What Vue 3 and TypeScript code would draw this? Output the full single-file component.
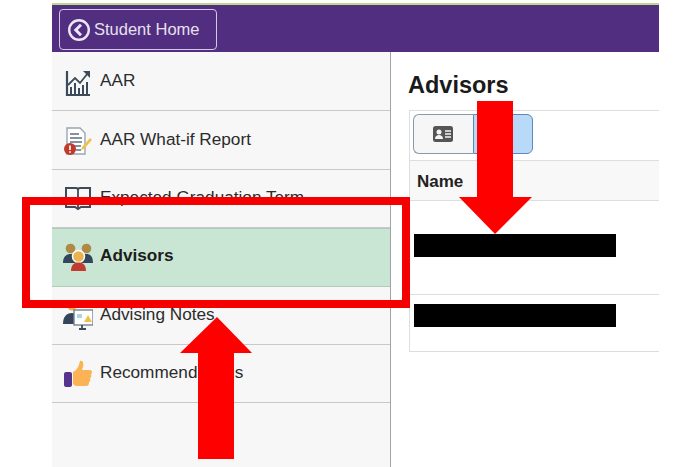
<script setup lang="ts">
interface NavItem {
  id: string
  label: string
  active?: boolean
}

const navItems: NavItem[] = [
  { id: 'aar', label: 'AAR' },
  { id: 'whatif', label: 'AAR What-if Report' },
  { id: 'grad', label: 'Expected Graduation Term' },
  { id: 'advisors', label: 'Advisors', active: true },
  { id: 'notes', label: 'Advising Notes' },
  { id: 'recs', label: 'Recommendations' },
]
</script>

<template>
  <div class="page">
    <div class="shell">
      <div class="accent"></div>
      <header class="topbar">
        <button class="home" type="button">
          <svg class="home-icon" viewBox="0 0 24 24" width="24" height="24" aria-hidden="true">
            <circle cx="12" cy="12" r="9.8" fill="none" stroke="#ece6f3" stroke-width="2.4" />
            <path d="M14 6.8 8.8 12l5.2 5.2" fill="none" stroke="#ece6f3" stroke-width="3" />
          </svg>
          <span>Student Home</span>
        </button>
      </header>

      <div class="body">
        <nav class="side">
          <a v-for="item in navItems" :key="item.id" class="row" :class="{ on: item.active }">
            <span class="ico">
              <svg v-if="item.id === 'aar'" viewBox="0 0 30 30" width="30" height="30" aria-hidden="true">
                <path d="M4 3v24h23" fill="none" stroke="#3d4a5a" stroke-width="2.2" />
                <path d="M5 17l7-7 5 5 8-10" fill="none" stroke="#3d4a5a" stroke-width="1.8" />
                <path d="M20 3h7v7z" fill="#3d4a5a" />
                <path d="M8 26v-7M12 26v-11M16 26v-6M20 26v-9M24 26v-12" stroke="#3d4a5a" stroke-width="2" fill="none" />
              </svg>
              <svg v-else-if="item.id === 'whatif'" viewBox="0 0 30 30" width="30" height="30" aria-hidden="true">
                <path d="M4 2h13l5 5v21H4z" fill="#fff" stroke="#9aa5b2" stroke-width="1.4" />
                <path d="M7 8h9M7 12h12M7 16h12M11 20h7M13 24h5" stroke="#5f6f82" stroke-width="1.5" fill="none" />
                <path d="M19 21 27 12l2 2-8 9-3 1z" fill="#eec14e" />
                <circle cx="7" cy="23" r="6" fill="#c0392b" />
                <path d="M7 19.500v4.500M7 25.200v1.500" stroke="#fff" stroke-width="1.700" fill="none" />
              </svg>
              <svg v-else-if="item.id === 'grad'" viewBox="0 0 30 30" width="30" height="30" aria-hidden="true">
                <path d="M3 4h10c1 0 2 1 2 2 0-1 1-2 2-2h10v19H18l-3 2-3-2H3z" fill="none" stroke="#3d4a5a" stroke-width="2" />
                <path d="M15 6v19" stroke="#3d4a5a" stroke-width="1.800" fill="none" />
              </svg>
              <svg v-else-if="item.id === 'advisors'" viewBox="0 0 30 30" width="30" height="30" aria-hidden="true">
                <circle cx="7.500" cy="5.500" r="4.800" fill="#b08a45" />
                <circle cx="23.500" cy="5.500" r="4.800" fill="#b08a45" />
                <path d="M0 20c0-6 3-9 8-9s8 3 8 9zM15 20c0-6 3-9 8-9s7 3 7 9z" fill="#33475c" />
                <circle cx="15.500" cy="13.500" r="6" fill="#e9b44f" stroke="#fff" stroke-width="1.500" />
                <path d="M8 28c0-6 3-8.500 7.500-8.500S23 22 23 28z" fill="#c23b30" />
              </svg>
              <svg v-else-if="item.id === 'notes'" viewBox="0 0 30 30" width="30" height="30" aria-hidden="true">
                <circle cx="9" cy="5" r="4.500" fill="#eeb04e" />
                <path d="M0 23c0-7 3-11 9-11s8 4 8 11z" fill="#33475c" />
                <rect x="11" y="9" width="19" height="15" fill="#fff" stroke="#77828f" stroke-width="1.400" />
                <path d="M21 21l4-7 4 7z" fill="#eec14e" />
                <path d="M14 13h5v4h-5z" fill="#a9d6e5" />
                <path d="M19 24v3M16 28h7" stroke="#3d4a5a" stroke-width="1.800" fill="none" />
              </svg>
              <svg v-else viewBox="0 0 30 30" width="30" height="30" aria-hidden="true">
                <rect x="1" y="12" width="8" height="15" rx="2" fill="#54348c" />
                <path d="M10 12c4-2 6-6 7-11 3-1 4 3 3 6l-1 3h8c2 0 3 3 1 4 1 2 0 4-1 4 1 2 0 4-1 4 0 3-1 4-3 4H14c-2 0-3-1-4-2z" fill="#fbb355" />
              </svg>
            </span>
            <span class="label">{{ item.label }}</span>
          </a>
        </nav>

        <main class="content">
          <h1 class="title">Advisors</h1>
          <section class="panel">
            <div class="toolbar">
              <div class="group">
                <button class="seg" type="button">
                  <svg viewBox="0 0 20 16" width="20" height="16" aria-hidden="true">
                    <rect width="20" height="16" rx="2.500" fill="#555" />
                    <circle cx="6" cy="6" r="2.500" fill="#f5f5f5" />
                    <path d="M2 13c0-3 2-4 4-4s4 1 4 4z" fill="#f5f5f5" />
                    <path d="M12 5h6M12 8h6M12 11h6" stroke="#f5f5f5" stroke-width="1.300" fill="none" />
                  </svg>
                </button>
                <button class="seg sel" type="button">
                  <svg viewBox="0 0 20 20" width="20" height="20" aria-hidden="true">
                    <circle cx="10" cy="10" r="9" fill="#4f5d70" />
                  </svg>
                </button>
              </div>
            </div>
            <div class="thead">Name</div>
            <div class="trow first"><span class="redact"></span></div>
            <div class="trow second"><span class="redact"></span></div>
          </section>
        </main>
      </div>
    </div>

    <svg class="marks" viewBox="0 0 673 467" width="673" height="467" aria-hidden="true">
      <rect x="26" y="201" width="380" height="103" fill="none" stroke="#f50000" stroke-width="8" />
      <path d="M217 317 252 353H234V459H198V353H180Z" fill="#fe0000" />
      <path d="M495 234 532 197H513V101H477V197H459Z" fill="#fe0000" />
    </svg>
  </div>
</template>

<style scoped>
.page {
  position: relative;
  width: 673px;
  height: 467px;
  overflow: hidden;
  background: #fff;
  font-family: "Liberation Sans", Arial, sans-serif;
  color: #2b2b2b;
}
.shell {
  width: 607px;
  height: 467px;
  margin-left: 52px;
  padding-top: 3px;
  box-sizing: border-box;
  display: flex;
  flex-direction: column;
}
.accent {
  height: 2px;
  background: #b9d98a;
}
.topbar {
  height: 47px;
  flex: none;
  background: #512e80;
  padding: 4px 7px;
  box-sizing: border-box;
}
.home {
  width: 158px;
  height: 41px;
  border: 1.500px solid #d5c8e6;
  border-radius: 4px;
  background: transparent;
  color: #e6e0ee;
  font: 16.500px "Liberation Sans", Arial, sans-serif;
  display: flex;
  align-items: center;
  gap: 3px;
  padding: 0 0 0 7px;
}
.body {
  flex: 1;
  display: flex;
  min-height: 0;
}
.side {
  width: 339px;
  flex: none;
  box-sizing: border-box;
  padding-top: 1px;
  background: #f7f7f7;
  border-right: 1px solid #a3a3a3;
}
.row {
  height: 58.400px;
  box-sizing: border-box;
  border-bottom: 1.500px solid #c9c9c9;
  padding: 0 0 0 11px;
  display: flex;
  align-items: center;
  gap: 7px;
  font-size: 17.200px;
}
.ico {
  width: 30px;
  height: 30px;
  flex: none;
  margin-top: 2px;
}
.label {
  margin-top: -2px;
}
.row.on {
  background: #c8e6d3;
  border-bottom-color: #b4c8bb;
  border-top: 1px solid #b4c8bb;
  font-weight: 700;
  color: #1c1c1c;
}
.row.on .label {
  margin-top: -3px;
}
.content {
  flex: 1;
  min-width: 0;
  padding-left: 18px;
}
.title {
  margin: 0 0 0 -1px;
  height: 58px;
  padding-top: 20px;
  box-sizing: border-box;
  font-size: 23.500px;
  line-height: 27px;
  font-weight: 700;
  color: #1a1a1a;
}
.panel {
  border-top: 1.500px solid #dedede;
  border-left: 1px solid #dedede;
  border-bottom: 1.500px solid #dcdcdc;
}
.toolbar {
  height: 50px;
  box-sizing: border-box;
  padding: 3px;
  border-bottom: 1px solid #dedede;
}
.group {
  display: flex;
  width: 120px;
  height: 40px;
}
.seg {
  flex: 1;
  padding: 0;
  background: #f6f6f6;
  border: 1px solid #8c98a4;
  border-right: 0;
  border-radius: 6px 0 0 6px;
  display: flex;
  align-items: center;
  justify-content: center;
}
.seg.sel {
  background: #b8d9f8;
  border: 1px solid #5e88b8;
  border-radius: 0 6px 6px 0;
}
.thead {
  height: 40px;
  box-sizing: border-box;
  background: #f8f8f8;
  border-bottom: 1.500px solid #dedede;
  padding: 2px 0 0 7px;
  display: flex;
  align-items: center;
  font-size: 17px;
  font-weight: 700;
  color: #222;
}
.trow {
  padding-left: 4px;
  box-sizing: border-box;
}
.trow.first {
  height: 94px;
  padding-top: 33px;
  border-bottom: 1px solid #dedede;
}
.trow.second {
  height: 56px;
  padding-top: 9px;
}
.redact {
  display: block;
  width: 202px;
  height: 23px;
  background: #000;
}
.marks {
  position: absolute;
  left: 0;
  top: 0;
  pointer-events: none;
}
</style>
